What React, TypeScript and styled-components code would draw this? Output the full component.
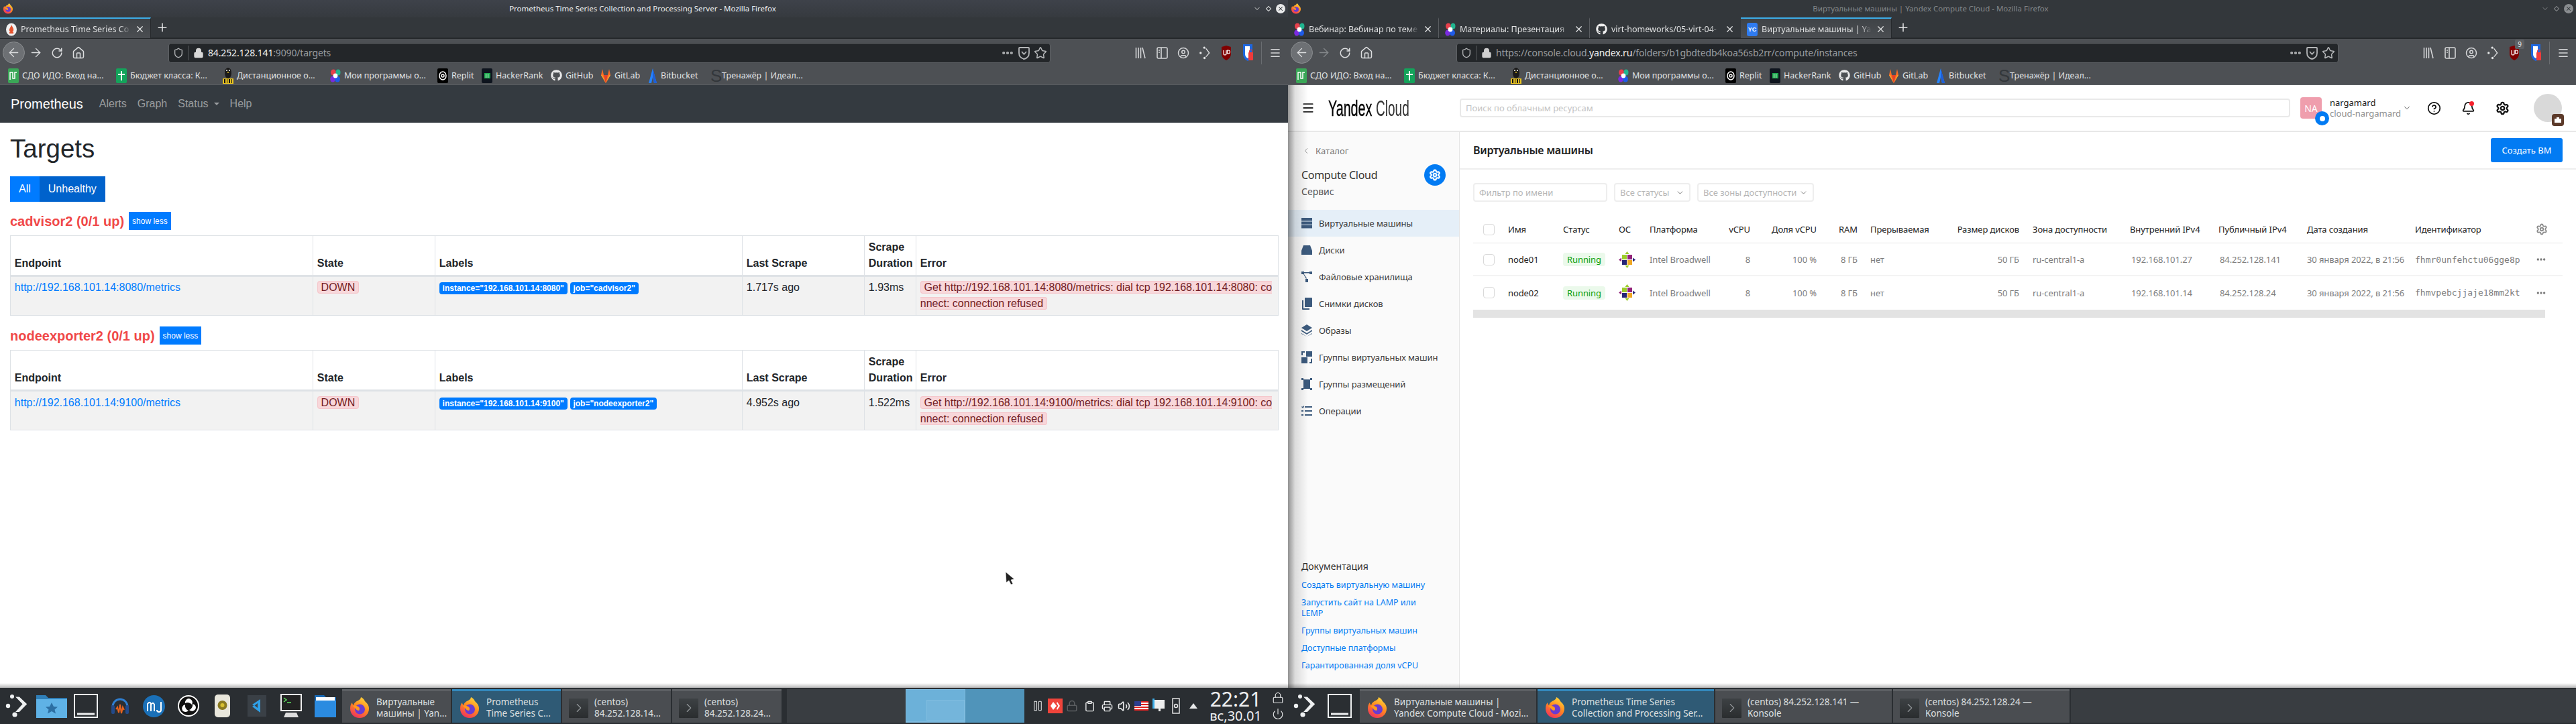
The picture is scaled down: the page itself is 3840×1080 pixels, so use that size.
import React from 'react';
import styled, { createGlobalStyle } from 'styled-components';
import { ArrowLeft, ArrowRight, RotateCw, Home, Shield, Lock, Star, CircleUser, Bell, CircleHelp, Settings, X, Plus, ChevronDown, ChevronLeft, ChevronRight, MoreHorizontal, Power, Clipboard, Printer, Volume2, Pause, Menu } from 'lucide-react';
import { FaGithub } from 'react-icons/fa';

const UI = '"Noto Sans", "Open Sans", sans-serif';
const WEB = '"Liberation Sans", Arial, sans-serif';

const Global = createGlobalStyle`
  html, body { margin: 0; padding: 0; background: #fff; }
  body { width: 3840px; height: 1080px; overflow: hidden; font-family: ${WEB}; }
  * { box-sizing: border-box; }
`;

const Screen = styled.div`
  position: relative; width: 3840px; height: 1080px; display: flex; flex-direction: column;
`;
const Windows = styled.div`display: flex; height: 1026px;`;
const Win = styled.div`
  position: relative; width: 1920px; height: 1026px; display: flex; flex-direction: column; overflow: hidden; background: #fff;
`;
const TitleBar = styled.div<{ $active?: boolean }>`
  height: 26px; flex: none; display: flex; align-items: center; position: relative; padding: 0 4px;
  background: ${p => p.$active ? 'linear-gradient(#3e424a, #363a3f)' : '#33373b'};
  color: ${p => p.$active ? '#eff0f1' : '#83878a'};
  font: 11.5px/26px ${UI};
`;
const TitleText = styled.div`flex: 1; text-align: center; padding-left: 28px; white-space: nowrap;`;
const WinButtons = styled.div`display: flex; align-items: center; gap: 6px; margin-right: 0;`;
const CloseDot = styled.span<{ $active?: boolean }>`
  width: 14px; height: 14px; border-radius: 50%; display: flex; align-items: center; justify-content: center;
  background: ${p => p.$active ? '#e8e9ea' : '#8a8d90'}; color: #33373b;
`;
const Diamond = styled.span<{ $active?: boolean }>`
  width: 6px; height: 6px; transform: rotate(45deg); border: 1px solid ${p => p.$active ? '#dfe0e1' : '#85888b'}; margin: 0 2px;
`;
const TabStrip = styled.div`
  height: 32px; flex: none; display: flex; background: #33373b; border-bottom: 2px solid #25282b;
`;
const Tab = styled.div<{ $active?: boolean; $sep?: boolean }>`
  width: 225px; height: 31px; flex: none; display: flex; align-items: center; padding: 2px 8px 0 9px; gap: 6px;
  color: #dfe0e1; font: 12.5px ${UI};
  background: ${p => p.$active ? 'linear-gradient(#3f4347, #4b4e52)' : 'transparent'};
  border-top: 2px solid ${p => p.$active ? '#3daee9' : 'transparent'};
  border-right: 1px solid ${p => p.$sep ? '#5a5d61' : p.$active ? '#26292c' : 'transparent'};
`;
const TabLabel = styled.span`
  flex: 1; white-space: nowrap; min-width: 0;
  mask-image: linear-gradient(to right, #000 90%, transparent 100%);
`;
const NewTab = styled.div`width: 34px; display: flex; align-items: center; justify-content: center; color: #e8e9ea;`;
const Toolbar = styled.div`
  height: 41px; flex: none; display: flex; align-items: center; background: #4d5054; padding-left: 4px; position: relative;
`;
const NavGroup = styled.div`width: 247px; display: flex; align-items: center; flex: none;`;
const BackBtn = styled.div`
  width: 33px; height: 33px; border-radius: 50%; background: #6d7074; border: 1px solid #8b8e91;
  display: flex; align-items: center; justify-content: center; color: #dcdddf; flex: none;
`;
const NavBtn = styled.div<{ $dim?: boolean }>`
  width: 32px; display: flex; align-items: center; justify-content: center; color: ${p => p.$dim ? '#85888b' : '#dcdddf'}; flex: none;
`;
const AddressBar = styled.div`
  width: 1315px; height: 30px; flex: none; display: flex; align-items: center; background: #232629; border: 1px solid #5e6165;
  border-radius: 4px; padding: 0 4px 0 6px; color: #a8aaad; font: 14px ${UI};
`;
const AddrDivider = styled.span`width: 1px; height: 22px; background: #55585b; margin: 0 7px 0 6px;`;
const Url = styled.div`flex: 1; margin-left: 6px; white-space: nowrap; color: #9a9da0; letter-spacing: -0.15px;`;
const UrlHi = styled.span`color: #eff0f1;`;
const ToolIcons = styled.div`margin-left: 118px; display: flex; align-items: center; color: #d5d6d8; position: relative;`;
const ToolIcon = styled.div`width: 32px; display: flex; align-items: center; justify-content: center; position: relative;`;
const ToolSep = styled.span`width: 1px; height: 34px; background: #6a6d71; margin: 0 4px;`;
const Badge9 = styled.span`
  position: absolute; top: -8px; right: 1px; width: 14px; height: 14px; background: #5d6064; color: #e8e9ea; border-radius: 2px;
  font: 10px/14px ${UI}; text-align: center;
`;
const AddrIcons = styled.div`display: flex; gap: 6px; align-items: center; color: #b4b6b8;`;
const Bookmarks = styled.div`
  height: 28px; flex: none; display: flex; align-items: center; background: #4d5054; border-bottom: 1px solid #5c5f63; padding-left: 12px;
  color: #e3e4e5; font: 12.5px ${UI};
`;
const Bookmark = styled.div<{ $w: number }>`
  width: ${p => p.$w}px; flex: none; display: flex; align-items: center; gap: 5px; white-space: nowrap;
`;

/* prometheus */
const PromNav = styled.nav`
  height: 56px; flex: none; background: #343a40; display: flex; align-items: center; padding: 0 16px;
`;
const Brand = styled.div`font: 20px ${WEB}; color: #fff; margin-right: 16px;`;
const NavLink = styled.div`font: 16px ${WEB}; color: rgba(255,255,255,.5); padding: 0 8px; display: flex; align-items: center;`;
const Caret = styled.span`
  width: 0; height: 0; border-left: 4.8px solid transparent; border-right: 4.8px solid transparent; border-top: 4.8px solid rgba(255,255,255,.5); margin-left: 8px;
`;
const PromBody = styled.div`padding: 0 15px; background: #fff; flex: 1; color: #212529;`;
const H1 = styled.h1`margin: 15px 0 17px; font: 400 38.5px/48px ${WEB}; color: #212529;`;
const FilterGroup = styled.div`display: flex; margin-bottom: 15px;`;
const FilterBtn = styled.div<{ $on?: boolean }>`
  height: 38px; padding: 0 13px; display: flex; align-items: center; font: 16px ${WEB}; color: #fff;
  background: ${p => p.$on ? '#0062cc' : '#007bff'};
`;
const JobHead = styled.div`display: flex; align-items: center; margin-bottom: 8px; height: 27px;`;
const JobTitle = styled.h3`margin: 0 7px 0 0; font: 700 20px/24px ${WEB}; color: #f04848;`;
const ShowLess = styled.div`
  height: 27px; padding: 0 5px; display: flex; align-items: center; background: #007bff; color: #fff; font: 12px ${WEB};
`;
const TargetTable = styled.table`
  width: 1890px; table-layout: fixed; border-collapse: collapse; margin-bottom: 16px; font: 16px/24px ${WEB}; color: #212529;
  th, td { border: 1px solid #dee2e6; padding: 4.8px 5.8px; vertical-align: top; text-align: left; }
  th { vertical-align: bottom; border-bottom: 3px solid #dee2e6; font-weight: 700; }
  td { background: #f2f2f2; }
`;
const EndpointLink = styled.span`color: #007bff;`;
const Alert = styled.span`
  background: #f8d7da; border: 1px solid #f5c6cb; border-radius: 4px; color: #721c24; padding: 0 4.8px; word-break: break-all;
`;
const LabelPill = styled.span`
  display: inline-block; background: #007bff; color: #fff; font-size: 12px; font-weight: 700; line-height: 12px; padding: 3px 4.8px;
  border-radius: 4px; margin-right: 4px; white-space: nowrap; vertical-align: baseline;
`;
const Cursor = styled.svg`position: absolute; left: 1498px; top: 853px;`;

/* yandex */
const YcHeader = styled.div`
  height: 70px; flex: none; display: flex; align-items: center; padding: 0 21px 0 20px; border-bottom: 2px solid #e8e8e8; background: #fff;
`;
const Burger = styled.div`width: 20px; color: #222; margin-right: 20px; display: flex;`;
const Logo = styled.div`width: 196px; display: flex; flex: none; color: #000; font: 34px/40px ${WEB}; white-space: nowrap;`;
const LogoWord = styled.span<{ $w: number; $k: number; $thin?: boolean }>`
  display: inline-block; width: ${p => p.$w}px; transform: scaleX(${p => p.$k}); transform-origin: left center;
  ${p => p.$thin ? 'color: #333; font-weight: 400;' : '-webkit-text-stroke: .4px #000;'}
`;
const Search = styled.div`
  flex: 1; height: 28px; border: 2px solid #e9e9e9; border-radius: 4px; padding-left: 7px; display: flex; align-items: center;
  font: 13px ${UI}; color: #c4c4c4; margin-right: 15px; white-space: nowrap;
`;
const AccAvatar = styled.div`
  position: relative; width: 32px; height: 32px; background: #ef9ead; border-radius: 4px; flex: none; color: #fff; font: 14px/34px ${UI}; text-align: center;
`;
const AccCloud = styled.span`
  position: absolute; right: -11px; bottom: -10px; width: 21px; height: 21px; border-radius: 50%; background: #027bf3; border: 0;
  display: flex; align-items: center; justify-content: center;
`;
const AccInfo = styled.div`width: 108px; margin-left: 12px; font: 13px/16px ${UI}; flex: none; color: #222; white-space: nowrap;`;
const AccSub = styled.div`color: #8d8d8d;`;
const HeadIcon = styled.div`width: 51px; display: flex; justify-content: center; flex: none; color: #111; position: relative;`;
const RedDot = styled.span`position: absolute; top: 0; left: 27px; width: 7px; height: 7px; border-radius: 50%; background: #f5222d;`;
const UserPic = styled.div`
  position: relative; width: 42px; height: 42px; margin-left: 21px; border-radius: 50%; background: #d9d9d9; flex: none; overflow: visible;
`;
const UserBag = styled.span`
  position: absolute; right: -3px; bottom: -6px; width: 18px; height: 18px; background: #5c3a2a; border-radius: 4px;
  display: flex; align-items: center; justify-content: center;
`;
const YcBody = styled.div`flex: 1; display: flex; min-height: 0;`;
const Sidebar = styled.aside`
  width: 256px; flex: none; display: flex; flex-direction: column; background: #fafafa; border-right: 1px solid #e5e5e5; color: #333; font: 13px ${UI};
`;
const CatalogBack = styled.div`display: flex; align-items: center; gap: 7px; height: 20px; margin: 18px 0 0 20px; color: #777; font-size: 13px;`;
const ServiceHead = styled.div`display: flex; align-items: center; justify-content: space-between; padding: 0 20px 0 20px; margin-top: 10px; height: 32px;`;
const ServiceName = styled.div`font: 16px ${UI}; color: #333; letter-spacing: -.3px;`;
const ServiceIcon = styled.span`
  width: 32px; height: 32px; border-radius: 50%; background: #027bf3; display: flex; align-items: center; justify-content: center; color: #fff;
`;
const ServiceKind = styled.div`margin: -1px 0 17px 20px; font: 14px/20px ${UI}; color: #555;`;
const SideItem = styled.div<{ $on?: boolean }>`
  height: 40px; flex: none; display: flex; align-items: center; gap: 10px; padding-left: 20px; white-space: nowrap;
  background: ${p => p.$on ? '#e5eff8' : 'transparent'}; color: #3a3a3a; letter-spacing: -.1px;
`;
const Docs = styled.div`margin-top: auto; padding: 0 20px 25px; font: 12.5px/16px ${UI}; color: #027bf3;`;
const DocsTitle = styled.div`font: 14px/20px ${UI}; color: #333; margin-bottom: 10px;`;
const DocLink = styled.div`margin-bottom: 10px; max-width: 200px; &:last-child { margin-bottom: 0; }`;
const Main = styled.main`flex: 1; min-width: 0; background: #fff;`;
const MainHead = styled.div`
  height: 56px; display: flex; align-items: center; justify-content: space-between; padding: 0 20px; border-bottom: 2px solid #eee;
`;
const MainTitle = styled.div`font: 600 16px ${UI}; color: #222; letter-spacing: -.25px;`;
const CreateBtn = styled.div`
  width: 107px; height: 36px; border-radius: 3px; background: #027bf3; color: #fff; font: 13px/36px ${UI}; text-align: center;
`;
const Filters = styled.div`display: flex; gap: 10px; margin: 20px 0 21px 20px; height: 28px;`;
const FilterBox = styled.div<{ $w: number }>`
  width: ${p => p.$w}px; height: 28px; border: 2px solid #eee; border-radius: 4px; padding: 0 7px; display: flex; align-items: center; justify-content: space-between;
  color: #b5b5b5; font: 13px ${UI}; white-space: nowrap;
`;
const COLS = '52px 82px 83px 46px 110px 40px 99px 61px 146px 95px 165px 132px 132px 161px 180px 40px';
const VmTable = styled.div`margin-left: 20px; width: 1624px;`;
const VmRow = styled.div<{ $head?: boolean; $last?: boolean }>`
  display: grid; grid-template-columns: ${COLS}; align-items: center; height: ${p => p.$head ? 41 : 49}px;
  border-bottom: ${p => p.$last ? 'none' : '1px solid #e5e5e5'};
  font: 13px ${UI}; color: ${p => p.$head ? '#222' : '#7d7d7d'}; white-space: nowrap; letter-spacing: -.1px;
`;
const Cell = styled.div<{ $right?: boolean; $pad?: number; $dark?: boolean; $mono?: boolean }>`
  text-align: ${p => p.$right ? 'right' : 'left'};
  padding-left: ${p => p.$pad || 0}px;
  ${p => p.$dark ? 'color: #222;' : ''}
  ${p => p.$mono ? `font: 13px "DejaVu Sans Mono", monospace; letter-spacing: 0;` : ''}
`;
const Check = styled.span`display: block; width: 17px; height: 17px; margin-left: 15px; border: 1px solid #d9d9d9; border-radius: 4px; background: #fff;`;
const Running = styled.span`
  display: inline-block; width: 63px; height: 20px; border-radius: 4px; background: #ebf9eb; color: #0aa00a; font: 13px/20px ${UI}; text-align: center;
`;
const HScroll = styled.div`margin: 1px 0 0 20px; width: 1598px; height: 12px; background: #e3e3e3;`;
const SideShadow = styled.div`
  position: absolute; left: 0; top: 127px; bottom: 0; width: 30px; pointer-events: none;
  background: linear-gradient(to right, rgba(0,0,0,.42), rgba(0,0,0,.12) 35%, rgba(0,0,0,0));
`;
const BottomShadow = styled.div`
  position: absolute; left: 0; right: 0; bottom: 0; height: 7px; pointer-events: none;
  background: linear-gradient(rgba(0,0,0,0), rgba(0,0,0,.28));
`;

/* taskbar */
const Taskbar = styled.div`height: 54px; flex: none; display: flex; background: #2a2e32;`;
const Panel = styled.div`width: 1920px; display: flex; align-items: stretch; padding: 2px 0;`;
const Launch = styled.div`width: 51px; flex: none; display: flex; align-items: center; justify-content: center;`;
const TaskRow = styled.div<{ $m?: number }>`display: flex; gap: 2px; margin-left: ${p => p.$m || 0}px;`;
const Task = styled.div<{ $w: number; $on?: boolean }>`
  width: ${p => p.$w}px; flex: none; display: flex; align-items: center; gap: 9px; padding: 3px 6px 0 10px;
  background: ${p => p.$on ? '#2f5a75' : '#4a4d51'}; border-top: 3px solid ${p => p.$on ? '#3489bd' : '#5d6064'};
  color: #dfe0e1; font: 13.5px/17px ${UI}; overflow: hidden;
`;
const TaskText = styled.div`white-space: pre;`;
const KonsoleIcon = styled.span`
  width: 29px; height: 29px; flex: none; background: linear-gradient(#3d4144, #2a2d2f); display: flex; align-items: center; justify-content: center; color: #93979a; border-radius: 1px;
`;
const Filler = styled.div<{ $m?: number }>`flex: 1; background: #393d41; margin-left: ${p => p.$m || 0}px;`;
const Pager = styled.div`width: 177px; flex: none; display: flex; background: #5094ba; position: relative;`;
const PagerActive = styled.div`width: 89px; background: #6cb1d9; border: 1px solid #7ebbdf; border-bottom-width: 2px; position: relative; overflow: hidden;`;
const PagerWin = styled.span`position: absolute; left: 30px; top: 15px; width: 57px; height: 31px; background: #74b5db; border: 1px solid #7fbcdf;`;
const Tray = styled.div`display: flex; align-items: center; padding-left: 7px; width: 393px; flex: none; color: #e8e9ea;`;
const TrayIcon = styled.div`width: 25.8px; flex: none; display: flex; align-items: center; justify-content: center; position: relative;`;
const Clock = styled.div`width: 94px; margin-left: 3px; flex: none; text-align: center; color: #eff0f1; font-family: ${UI};`;
const ClockTime = styled.div`font-size: 30px; line-height: 29px;`;
const ClockDate = styled.div`font-size: 20px; line-height: 21px; white-space: nowrap;`;
const TraySide = styled.div`width: 30px; flex: none; display: flex; flex-direction: column; align-items: center; gap: 6px; margin-left: 1px; color: #e8e9ea;`;

/* drawings */
const FirefoxLogo = ({ size = 32 }: { size?: number }) => {
  const id = `ff${size}`;
  return (
    <svg width={size} height={size} viewBox="0 0 32 32" style={{ flex: 'none' }}>
      <defs>
        <linearGradient id={id} x1="0.7" y1="0" x2="0.2" y2="1">
          <stop offset="0" stopColor="#ffd43a" /><stop offset=".45" stopColor="#ff8a1f" /><stop offset="1" stopColor="#ef2a62" />
        </linearGradient>
      </defs>
      <path d="M16 31C8 31 2 25 2 17c0-4 1-7 3-9 0 2 1 3 2 4 1-4 4-6 7-7 2-1 4-3 4-5 6 3 5 6 8 8 3 3 4 6 4 9 0 8-6 14-14 14z" fill={`url(#${id})`} />
      <circle cx="16.5" cy="18" r="7.5" fill="#6a3bd1" />
      <path d="M6 13c3-1 6 0 8 1 2 1 3 4 1 6-2 0-4-1-5-3z" fill="#ff9a1f" />
    </svg>
  );
};
const Petals = ({ size = 16 }: { size?: number }) => (
  <svg width={size} height={size + 4} viewBox="0 0 16 20" style={{ flex: 'none' }}>
    <ellipse cx="5" cy="5" rx="4" ry="4.5" fill="#e6404c" /><ellipse cx="12" cy="5" rx="3.5" ry="4.5" fill="#21b58f" />
    <ellipse cx="4" cy="15" rx="3.8" ry="4.5" fill="#7a2be0" /><ellipse cx="11" cy="15" rx="4" ry="4.5" fill="#1e5be8" />
    <circle cx="8" cy="10" r="3.4" fill="#fff" />
  </svg>
);
const PromFav = () => (
  <svg width="16" height="20" viewBox="0 0 16 20" style={{ flex: 'none' }}>
    <ellipse cx="8" cy="10" rx="8" ry="9.5" fill="#f1f1f1" />
    <path d="M8 3c1 3 4 5 3 9-1 3-5 3-6 0-1-3 2-5 3-9z" fill="#e6522c" /><rect x="5" y="14" width="6" height="2" fill="#e6522c" />
  </svg>
);
const YcFav = styled.span`
  width: 16px; height: 20px; flex: none; border-radius: 3px; background: #2f7bf0; color: #fff; font: 700 9px/20px ${WEB}; text-align: center;
`;
const FfExt = ({ c = '#e6e7e8', size = 20 }: { c?: string; size?: number }) => (
  <svg width={size} height={size} viewBox="0 0 20 24" fill={c}>
    <circle cx="9" cy="2.5" r="2" /><circle cx="2.5" cy="12" r="2" /><circle cx="9.5" cy="21" r="2" />
    <path d="M11 4l6 8-6 7 2 0 6-7-6-8z" />
  </svg>
);
const Launcher = () => (
  <svg width="36" height="36" viewBox="0 0 36 36" fill="#eef0f1">
    <circle cx="10" cy="4" r="3" /><circle cx="4" cy="18" r="3.2" /><circle cx="14" cy="31" r="3.6" />
    <path d="M18 5l11 12-11 13 6 0 12-13L24 5z" transform="translate(-2,0) scale(.95,.9)" />
  </svg>
);
const LibraryIcon = () => (
  <svg width="16" height="20" viewBox="0 0 16 20" fill="none" stroke="currentColor" strokeWidth="1.6">
    <path d="M1.5 2v16M5 2v16M8.5 2v16M11 2l4 16" />
  </svg>
);
const SidebarIcon = () => (
  <svg width="17" height="20" viewBox="0 0 17 20" fill="none" stroke="currentColor" strokeWidth="1.6">
    <rect x="1" y="2" width="15" height="16" rx="2" /><path d="M7 2v16" /><path d="M3 6h2M3 9h2" />
  </svg>
);
const Ubo = () => (
  <svg width="16" height="24" viewBox="0 0 16 24"><path d="M8 1l7 2v10c0 5-3 8-7 10-4-2-7-5-7-10V3z" fill="#800000" /><path d="M4 8v5a2 2 0 004 0V8M9.5 13V8h1.5a2.5 2.5 0 010 5z" stroke="#fff" fill="none" strokeWidth="1.2" /></svg>
);
const Bitwarden = () => (
  <svg width="16" height="28" viewBox="0 0 16 28"><path d="M1 1h14v14c0 6-3 9-7 11-4-2-7-5-7-11z" fill="#1d67e0" /><path d="M4 4h7v12c0 3-2 5-3 6-2-1-4-3-4-6z" fill="#fff" /><rect x="9" y="13" width="7" height="12" rx="1" fill="#ef3b3b" /><path d="M10.5 13v-2a2 2 0 014 0v2" stroke="#ef3b3b" fill="none" /></svg>
);
const Pocket = () => (
  <svg width="17" height="22" viewBox="0 0 17 22" fill="none" stroke="currentColor" strokeWidth="1.8"><path d="M2 3h13a1 1 0 011 1v7c0 5-3 8-7.500 9C4 19 1 16 1 11V4a1 1 0 011-1z" /><path d="M5 9l3.500 4L12 9" /></svg>
);
const Gitlab = () => (
  <svg width="16" height="24" viewBox="0 0 16 24"><path d="M8 23L1 11l2-9 2 9h6l2-9 2 9z" fill="#fc6d26" /><path d="M8 23L5 11h6z" fill="#e24329" /><path d="M1 11l7 12-5-12zM15 11l-7 12 5-12z" fill="#fca326" /></svg>
);
const Bitbucket = () => (
  <svg width="14" height="24" viewBox="0 0 14 24"><path d="M7 1l6 22H9L7 14l-2 9H1z" fill="#2684ff" /><path d="M7 1l6 22H9L7 14z" fill="#1f5fd6" /></svg>
);
const Tux = () => (
  <svg width="16" height="26" viewBox="0 0 16 26"><rect x="0" y="17" width="16" height="8" fill="#e8c220" /><ellipse cx="8" cy="9" rx="5" ry="8" fill="#1a1a1a" /><circle cx="6" cy="5" r="1" fill="#fff" /><circle cx="10" cy="5" r="1" fill="#fff" /><path d="M6 7h4l-2 2z" fill="#e8c220" /><path d="M2 18h2v6H2zM6 18h1v6H6zM9 18h2v6H9zM13 18h1v6h-1z" fill="#111" /></svg>
);
const Square = styled.span<{ $bg: string; $w?: number }>`
  width: ${p => p.$w || 16}px; height: 22px; flex: none; background: ${p => p.$bg}; border-radius: 2px; display: flex; align-items: center; justify-content: center;
`;
const SIcon = styled.span`width: 12px; flex: none; color: #33373b; font: 26px/24px ${WEB}; text-align: center;`;

const BOOK = [
  { w: 161, t: 'СДО ИДО: Вход на...', i: <Square $bg="#3aa757"><svg width="12" height="14" viewBox="0 0 12 14" fill="none" stroke="#fff" strokeWidth="1.5"><path d="M1 13V2h4v9h3V2h3" /></svg></Square> },
  { w: 159, t: 'Бюджет класса: К...', i: <Square $bg="#14a35b"><svg width="10" height="16" viewBox="0 0 10 16" fill="#fff"><path d="M4 1h2v14H4zM0 5h10v2H0z" /></svg></Square> },
  { w: 160, t: 'Дистанционное о...', i: <Tux /> },
  { w: 160, t: 'Мои программы о...', i: <Petals /> },
  { w: 66, t: 'Replit', i: <Square $bg="#000"><svg width="12" height="14" viewBox="0 0 12 14" fill="none" stroke="#fff" strokeWidth="1.5"><ellipse cx="6" cy="7" rx="5" ry="6" /><circle cx="6" cy="7" r="2" /></svg></Square> },
  { w: 103, t: 'HackerRank', i: <Square $bg="#0e141e"><svg width="9" height="8" viewBox="0 0 9 8" fill="#1ba94c"><rect width="9" height="8" /><path d="M2 1h1v6H2zM5 1h1v6H5z" fill="#fff" /></svg></Square> },
  { w: 74, t: 'GitHub', i: <FaGithub size={17} color="#e9e9ea" /> },
  { w: 71, t: 'GitLab', i: <Gitlab /> },
  { w: 93, t: 'Bitbucket', i: <Bitbucket /> },
  { w: 190, t: 'Тренажёр | Идеал...', i: <SIcon>S</SIcon> },
];

const Chrome = ({ active, url, children, tabs, badge }: { active?: boolean; url: React.ReactNode; children?: React.ReactNode; tabs: React.ReactNode; badge?: boolean }) => (
  <>
    <TitleBar $active={active}>
      <FirefoxLogo size={16} />
      <TitleText>{children}</TitleText>
      <WinButtons>
        <ChevronDown size={12} color={active ? '#dfe0e1' : '#85888b'} />
        <Diamond $active={active} />
        <CloseDot $active={active}><X size={10} strokeWidth={2.5} /></CloseDot>
      </WinButtons>
    </TitleBar>
    <TabStrip>{tabs}</TabStrip>
    <Toolbar>
      <NavGroup>
        <BackBtn><ArrowLeft size={21} strokeWidth={1.6} /></BackBtn>
        <NavBtn $dim={!active}><ArrowRight size={21} strokeWidth={1.6} /></NavBtn>
        <NavBtn><RotateCw size={18} strokeWidth={2} /></NavBtn>
        <NavBtn><Home size={20} strokeWidth={1.8} /></NavBtn>
      </NavGroup>
      <AddressBar>
        <Shield size={16} color="#b4b6b8" />
        <AddrDivider />
        {url}
        <AddrIcons>
          <MoreHorizontal size={20} strokeWidth={3} />
          <Pocket />
          <Star size={20} strokeWidth={1.8} />
        </AddrIcons>
      </AddressBar>
      <ToolIcons>
        <ToolIcon><LibraryIcon /></ToolIcon>
        <ToolIcon><SidebarIcon /></ToolIcon>
        <ToolIcon><CircleUser size={18} /></ToolIcon>
        <ToolIcon><FfExt /></ToolIcon>
        <ToolIcon><Ubo />{badge && <Badge9>9</Badge9>}</ToolIcon>
        <ToolIcon><Bitwarden /></ToolIcon>
        <ToolSep />
        <ToolIcon><Menu size={18} strokeWidth={2.2} /></ToolIcon>
      </ToolIcons>
    </Toolbar>
    <Bookmarks>
      {BOOK.map(b => <Bookmark key={b.t} $w={b.w}>{b.i}<span>{b.t}</span></Bookmark>)}
    </Bookmarks>
  </>
);

const JOBS = [
  { name: 'cadvisor2', addr: '192.168.101.14:8080', ago: '1.717s ago', dur: '1.93ms' },
  { name: 'nodeexporter2', addr: '192.168.101.14:9100', ago: '4.952s ago', dur: '1.522ms' },
];

const PromPage = () => (
  <>
    <PromNav>
      <Brand>Prometheus</Brand>
      <NavLink>Alerts</NavLink><NavLink>Graph</NavLink><NavLink>Status<Caret /></NavLink><NavLink>Help</NavLink>
    </PromNav>
    <PromBody>
      <H1>Targets</H1>
      <FilterGroup><FilterBtn>All</FilterBtn><FilterBtn $on>Unhealthy</FilterBtn></FilterGroup>
      {JOBS.map(j => (
        <React.Fragment key={j.name}>
          <JobHead><JobTitle>{j.name} (0/1 up)</JobTitle><ShowLess>show less</ShowLess></JobHead>
          <TargetTable>
            <colgroup>
              <col width="451" /><col width="182" /><col width="458" /><col width="182" /><col width="77" /><col width="540" />
            </colgroup>
            <thead>
              <tr><th>Endpoint</th><th>State</th><th>Labels</th><th>Last Scrape</th><th>Scrape Duration</th><th>Error</th></tr>
            </thead>
            <tbody>
              <tr>
                <td><EndpointLink>http://{j.addr}/metrics</EndpointLink></td>
                <td><Alert>DOWN</Alert></td>
                <td><LabelPill>instance="{j.addr}"</LabelPill><LabelPill>job="{j.name}"</LabelPill></td>
                <td>{j.ago}</td>
                <td>{j.dur}</td>
                <td><Alert>Get http://{j.addr}/metrics: dial tcp {j.addr}: connect: connection refused</Alert></td>
              </tr>
            </tbody>
          </TargetTable>
        </React.Fragment>
      ))}
    </PromBody>
  </>
);

const SI = ({ d }: { d: React.ReactNode }) => (
  <svg width="16" height="20" viewBox="0 0 16 20" fill="#3c5a7d" style={{ flex: 'none' }}>{d}</svg>
);
const SIDE: [string, React.ReactNode][] = [
  ['Виртуальные машины', <><rect y="2" width="16" height="4.500" /><rect y="7.500" width="16" height="4.500" /><rect y="13" width="16" height="4.500" /></>],
  ['Диски', <path d="M3 3h10l3 8v6H0v-6z" />],
  ['Файловые хранилища', <path d="M0 2h4v4H0zM12 2h4v4h-4zM6 13h4v5H6zM4 3h8v1.500H4zM3 6l4 7 1-1-4-6z" />],
  ['Снимки дисков', <><path d="M5 1h10a1 1 0 011 1v12a1 1 0 01-1 1H5z" /><path d="M3 5v12h9v2H2a1 1 0 01-1-1V5z" /></>],
  ['Образы', <path d="M8 1l8 5-8 5-8-5zM0 9l8 5 8-5v2l-8 5-8-5zM0 14l8 5 8-5v1l-8 4-8-4z" />],
  ['Группы виртуальных машин', <path d="M7 1h9v8H7zM0 10h9v9H0zM0 1h5v2H2v4H0zM11 12h5v7h-4v-2h2v-5z" />],
  ['Группы размещений', <path d="M3 3h10v14H3zM0 1h3v3H0zM13 1h3v3h-3zM0 16h3v3H0zM13 16h3v3h-3z" />],
  ['Операции', <path d="M5 3h11v2H5zM5 9h11v2H5zM5 15h11v2H5zM0 4l1-1 1 1 2-2v2L2 6zM0 9h3v2H0zM0 15h3v2H0z" />],
];
const DOCS = ['Создать виртуальную машину', 'Запустить сайт на LAMP или LEMP', 'Группы виртуальных машин', 'Доступные платформы', 'Гарантированная доля vCPU'];

const CentOs = () => (
  <svg width="25" height="25" viewBox="0 0 25 25">
    <path d="M12.500 0l3 4h-6z" fill="#9ccd2a" /><path d="M25 12.500l-4 3v-6z" fill="#262577" /><path d="M12.500 25l-3-4h6z" fill="#9ccd2a" /><path d="M0 12.500l4-3v6z" fill="#932279" />
    <rect x="5" y="5" width="7" height="7" fill="#9ccd2a" /><rect x="13" y="5" width="7" height="7" fill="#932279" />
    <rect x="5" y="13" width="7" height="7" fill="#262577" /><rect x="13" y="13" width="7" height="7" fill="#efa724" />
  </svg>
);
const VMS = [
  ['node01', '192.168.101.27', '84.252.128.141', 'fhmr0unfehctu06gge8p'],
  ['node02', '192.168.101.14', '84.252.128.24', 'fhmvpebcjjaje18mm2kt'],
];

const YandexPage = () => (
  <>
    <YcHeader>
      <Burger><Menu size={22} strokeWidth={2.2} /></Burger>
      <Logo><LogoWord $w={71} $k={0.58}>Yandex</LogoWord><LogoWord $w={50} $k={0.56} $thin>Cloud</LogoWord></Logo>
      <Search>Поиск по облачным ресурсам</Search>
      <AccAvatar>NA<AccCloud><svg width="10" height="10" viewBox="0 0 10 10" fill="#fff"><circle cx="5" cy="5" r="4" /></svg></AccCloud></AccAvatar>
      <AccInfo>nargamard<AccSub>cloud-nargamard</AccSub></AccInfo>
      <ChevronDown size={14} strokeWidth={1.4} color="#333" style={{ marginRight: 8, flex: 'none' }} />
      <HeadIcon><CircleHelp size={21} strokeWidth={2} /></HeadIcon>
      <HeadIcon><Bell size={21} strokeWidth={2} /><RedDot /></HeadIcon>
      <HeadIcon><Settings size={21} strokeWidth={2.6} /></HeadIcon>
      <UserPic><UserBag><svg width="10" height="10" viewBox="0 0 10 10" fill="#fff"><path d="M0 3h10v6H0zM3 1h4v2H3z" /></svg></UserBag></UserPic>
    </YcHeader>
    <YcBody>
      <Sidebar>
        <CatalogBack><ChevronLeft size={14} strokeWidth={1.3} />Каталог</CatalogBack>
        <ServiceHead><ServiceName>Compute Cloud</ServiceName><ServiceIcon><Settings size={18} strokeWidth={3} /></ServiceIcon></ServiceHead>
        <ServiceKind>Сервис</ServiceKind>
        {SIDE.map(([t, d], i) => <SideItem key={t} $on={i === 0}><SI d={d} />{t}</SideItem>)}
        <Docs>
          <DocsTitle>Документация</DocsTitle>
          {DOCS.map(d => <DocLink key={d}>{d}</DocLink>)}
        </Docs>
      </Sidebar>
      <Main>
        <MainHead><MainTitle>Виртуальные машины</MainTitle><CreateBtn>Создать ВМ</CreateBtn></MainHead>
        <Filters>
          <FilterBox $w={200}>Фильтр по имени</FilterBox>
          <FilterBox $w={114}>Все статусы<ChevronDown size={13} strokeWidth={1.4} color="#555" /></FilterBox>
          <FilterBox $w={174}>Все зоны доступности<ChevronDown size={13} strokeWidth={1.4} color="#555" /></FilterBox>
        </Filters>
        <VmTable>
          <VmRow $head>
            <Check /><Cell>Имя</Cell><Cell>Статус</Cell><Cell>ОС</Cell><Cell>Платформа</Cell>
            <Cell $right>vCPU</Cell><Cell $right>Доля vCPU</Cell><Cell $right>RAM</Cell><Cell $pad={19}>Прерываемая</Cell>
            <Cell $right>Размер дисков</Cell><Cell $pad={20}>Зона доступности</Cell><Cell>Внутренний IPv4</Cell><Cell>Публичный IPv4</Cell>
            <Cell>Дата создания</Cell><Cell>Идентификатор</Cell><Settings size={18} color="#8a8a8a" strokeWidth={2.4} />
          </VmRow>
          {VMS.map((v, i) => (
            <VmRow key={v[0]} $last={i === 1}>
              <Check /><Cell $dark>{v[0]}</Cell><Cell><Running>Running</Running></Cell><CentOs /><Cell>Intel Broadwell</Cell>
              <Cell $right>8</Cell><Cell $right>100 %</Cell><Cell $right>8 ГБ</Cell><Cell $pad={19}>нет</Cell>
              <Cell $right>50 ГБ</Cell><Cell $pad={20}>ru-central1-a</Cell><Cell $pad={2}>{v[1]}</Cell><Cell $pad={2}>{v[2]}</Cell>
              <Cell>30 января 2022, в 21:56</Cell><Cell $mono>{v[3]}</Cell><MoreHorizontal size={16} strokeWidth={3} color="#777" />
            </VmRow>
          ))}
        </VmTable>
        <HScroll />
      </Main>
    </YcBody>
  </>
);

const FolderIcon = () => (
  <svg width="46" height="36" viewBox="0 0 46 36"><path d="M0 2h14l4 4h28v30H0z" fill="#2f7fb8" /><path d="M0 8h46v28H0z" fill="#5fb2e6" /><path d="M23 13l3 6 6 .5-4.500 4 1.500 6-6-3.500-6 3.500 1.500-6-4.500-4 6-.5z" fill="#2c6fa3" /></svg>
);
const DesktopIcon = () => (
  <svg width="36" height="36" viewBox="0 0 36 36" fill="none" stroke="#eef0f1" strokeWidth="2"><rect x="1" y="1" width="34" height="34" /><path d="M5 30h26" strokeWidth="3" /></svg>
);
const Audacity = () => (
  <svg width="26" height="34" viewBox="0 0 26 34"><path d="M2 18a11 11 0 0122 0" fill="none" stroke="#2f7fd1" strokeWidth="3" /><rect x="0" y="16" width="5" height="13" rx="2" fill="#234a8a" /><rect x="21" y="16" width="5" height="13" rx="2" fill="#234a8a" /><path d="M7 22l2-3 2 8 2-12 2 13 2-9 2 4" fill="none" stroke="#e5621f" strokeWidth="2" /></svg>
);
const MuseScore = () => (
  <svg width="33" height="33" viewBox="0 0 33 33"><circle cx="16.500" cy="16.500" r="16.500" fill="#1a70b8" /><path d="M7 24V13c2-3 4-3 5 0v11M12 14c2-3 4-3 5 0v10M21 22a3 3 0 006 0V10" fill="none" stroke="#fff" strokeWidth="2" /></svg>
);
const Obs = () => (
  <svg width="32" height="32" viewBox="0 0 32 32"><circle cx="16" cy="16" r="15" fill="#111" stroke="#fff" strokeWidth="2" /><path d="M16 5a6 6 0 015 9 8 8 0 00-10-2 6 6 0 015-7zM27 19a6 6 0 01-10 3 8 8 0 005-9 6 6 0 015 6zM7 23a6 6 0 014-9 8 8 0 005 9 6 6 0 01-9 0z" fill="#fff" /></svg>
);
const Speaker = () => (
  <svg width="25" height="36" viewBox="0 0 25 36"><rect x="1" y="1" width="23" height="34" rx="5" fill="#e9e7dc" /><circle cx="12.500" cy="17" r="7" fill="#8a7a20" /><circle cx="12.500" cy="17" r="3" fill="#d8c030" /></svg>
);
const VsIcon = () => (
  <svg width="28" height="32" viewBox="0 0 28 32"><rect width="28" height="32" fill="#3a4046" /><path d="M19 6v20l-12-9 3-2 5 4v-7l-5 4-3-2z" fill="#2f9fe6" /></svg>
);
const TermIcon = () => (
  <svg width="32" height="36" viewBox="0 0 32 36"><rect width="32" height="26" fill="#eee" /><rect x="2" y="2" width="28" height="22" fill="#222" /><path d="M5 6l4 3-4 3M10 13h6" stroke="#5fe05f" strokeWidth="1.5" fill="none" /><path d="M8 28h16l3 7H5z" fill="#ddd" /></svg>
);
const FilesIcon = () => (
  <svg width="32" height="34" viewBox="0 0 32 34"><path d="M0 1h14l3 3h15v6H0z" fill="#1a6ab5" /><rect x="2" y="4" width="28" height="6" fill="#fff" /><path d="M0 9h32v25H0z" fill="#2b8be0" /></svg>
);

const Flag = styled.span`
  width: 21px; height: 14px; display: block;
  background: linear-gradient(#2c3e8f, #2c3e8f) 0 0/10px 7px no-repeat, repeating-linear-gradient(#d22 0 2px, #fff 2px 4px);
`;
const AnyDesk = styled.span`width: 22px; height: 22px; background: #ef443b; display: flex; align-items: center; justify-content: center;`;
const TriUp = styled.span`width: 0; height: 0; border-left: 6px solid transparent; border-right: 6px solid transparent; border-bottom: 8px solid #e8e9ea;`;

const App = () => (
  <Screen>
    <Global />
    <Windows>
      <Win>
        <Chrome active url={<><Lock size={16} color="#d8d8d8" fill="#d8d8d8" /><Url><UrlHi>84.252.128.141</UrlHi>:9090/targets</Url></>}
          tabs={<><Tab $active><PromFav /><TabLabel>Prometheus Time Series Co</TabLabel><X size={15} /></Tab><NewTab><Plus size={20} strokeWidth={1.8} /></NewTab></>}>
          Prometheus Time Series Collection and Processing Server - Mozilla Firefox
        </Chrome>
        <PromPage />
        <Cursor width="16" height="20" viewBox="0 0 16 20"><path d="M1 0l1 16 4-3 3 6 3-1-3-6 5-1z" fill="#222" stroke="#fff" strokeWidth=".6" /></Cursor>
        <BottomShadow />
      </Win>
      <Win>
        <Chrome badge url={<><Lock size={16} color="#d0d0d0" fill="#d0d0d0" /><Url>https://console.cloud.<UrlHi>yandex.ru</UrlHi>/folders/b1gbdtedb4koa56sb2rr/compute/instances</Url></>}
          tabs={<>
            <Tab $sep><Petals /><TabLabel>Вебинар: Вебинар по теме</TabLabel><X size={15} /></Tab>
            <Tab $sep><Petals /><TabLabel>Материалы: Презентация</TabLabel><X size={15} /></Tab>
            <Tab><FaGithub size={17} color="#eee" /><TabLabel>virt-homeworks/05-virt-04-</TabLabel><X size={15} /></Tab>
            <Tab $active><YcFav>YC</YcFav><TabLabel>Виртуальные машины | Ya</TabLabel><X size={15} /></Tab>
            <NewTab><Plus size={20} strokeWidth={1.8} /></NewTab>
          </>}>
          Виртуальные машины | Yandex Compute Cloud - Mozilla Firefox
        </Chrome>
        <YandexPage />
        <SideShadow />
        <BottomShadow />
      </Win>
    </Windows>
    <Taskbar>
      <Panel>
        <Launch><Launcher /></Launch><Launch><FolderIcon /></Launch><Launch><DesktopIcon /></Launch>
        <Launch><Audacity /></Launch><Launch><MuseScore /></Launch><Launch><Obs /></Launch><Launch><Speaker /></Launch>
        <Launch><VsIcon /></Launch><Launch><TermIcon /></Launch><Launch><FilesIcon /></Launch>
        <TaskRow>
          <Task $w={162}><FirefoxLogo /><TaskText>{'Виртуальные\nмашины | Yan...'}</TaskText></Task>
          <Task $w={162} $on><FirefoxLogo /><TaskText>{'Prometheus\nTime Series C...'}</TaskText></Task>
          <Task $w={162}><KonsoleIcon><ChevronRight size={22} strokeWidth={1.2} /></KonsoleIcon><TaskText>{'(centos)\n84.252.128.14...'}</TaskText></Task>
          <Task $w={163}><KonsoleIcon><ChevronRight size={22} strokeWidth={1.2} /></KonsoleIcon><TaskText>{'(centos)\n84.252.128.24...'}</TaskText></Task>
        </TaskRow>
        <Filler $m={8} />
        <Pager><PagerActive><PagerWin /></PagerActive></Pager>
        <Tray>
          <TrayIcon><Pause size={18} strokeWidth={1.4} /></TrayIcon>
          <TrayIcon><AnyDesk><svg width="14" height="12" viewBox="0 0 14 12" fill="#fff"><path d="M4 0l5 6-5 6-4-6zM10 0l4 6-4 6-1-2 2.500-4L9 2z" /></svg></AnyDesk></TrayIcon>
          <TrayIcon><Lock size={18} color="#5a5d60" /></TrayIcon>
          <TrayIcon><Clipboard size={17} /></TrayIcon>
          <TrayIcon><Printer size={17} /></TrayIcon>
          <TrayIcon><Volume2 size={19} /></TrayIcon>
          <TrayIcon><Flag /></TrayIcon>
          <TrayIcon><svg width="18" height="22" viewBox="0 0 18 22" fill="#eee"><rect x="3" y="2" width="15" height="13" /><rect x="0" y="0" width="3" height="15" fill="#3daee9" /><rect x="9" y="15" width="3" height="4" /></svg></TrayIcon>
          <TrayIcon><svg width="12" height="24" viewBox="0 0 12 24" fill="none" stroke="#eee" strokeWidth="1.4"><rect x="1" y="1" width="10" height="22" /><circle cx="6" cy="12" r="2.500" /></svg></TrayIcon>
          <TrayIcon><TriUp /></TrayIcon>
          <Clock><ClockTime>22:21</ClockTime><ClockDate>вс,30.01</ClockDate></Clock>
          <TraySide><Lock size={18} strokeWidth={1.5} /><Power size={18} strokeWidth={1.5} /></TraySide>
        </Tray>
      </Panel>
      <Panel>
        <Launch><Launcher /></Launch><Launch><DesktopIcon /></Launch>
        <TaskRow $m={5}>
          <Task $w={263}><FirefoxLogo /><TaskText>{'Виртуальные машины |\nYandex Compute Cloud - Mozi...'}</TaskText></Task>
          <Task $w={263} $on><FirefoxLogo /><TaskText>{'Prometheus Time Series\nCollection and Processing Ser...'}</TaskText></Task>
          <Task $w={263}><KonsoleIcon><ChevronRight size={22} strokeWidth={1.2} /></KonsoleIcon><TaskText>{'(centos) 84.252.128.141 —\nKonsole'}</TaskText></Task>
          <Task $w={263}><KonsoleIcon><ChevronRight size={22} strokeWidth={1.2} /></KonsoleIcon><TaskText>{'(centos) 84.252.128.24 —\nKonsole'}</TaskText></Task>
        </TaskRow>
        <Filler $m={2} />
      </Panel>
    </Taskbar>
  </Screen>
);

export default App;
